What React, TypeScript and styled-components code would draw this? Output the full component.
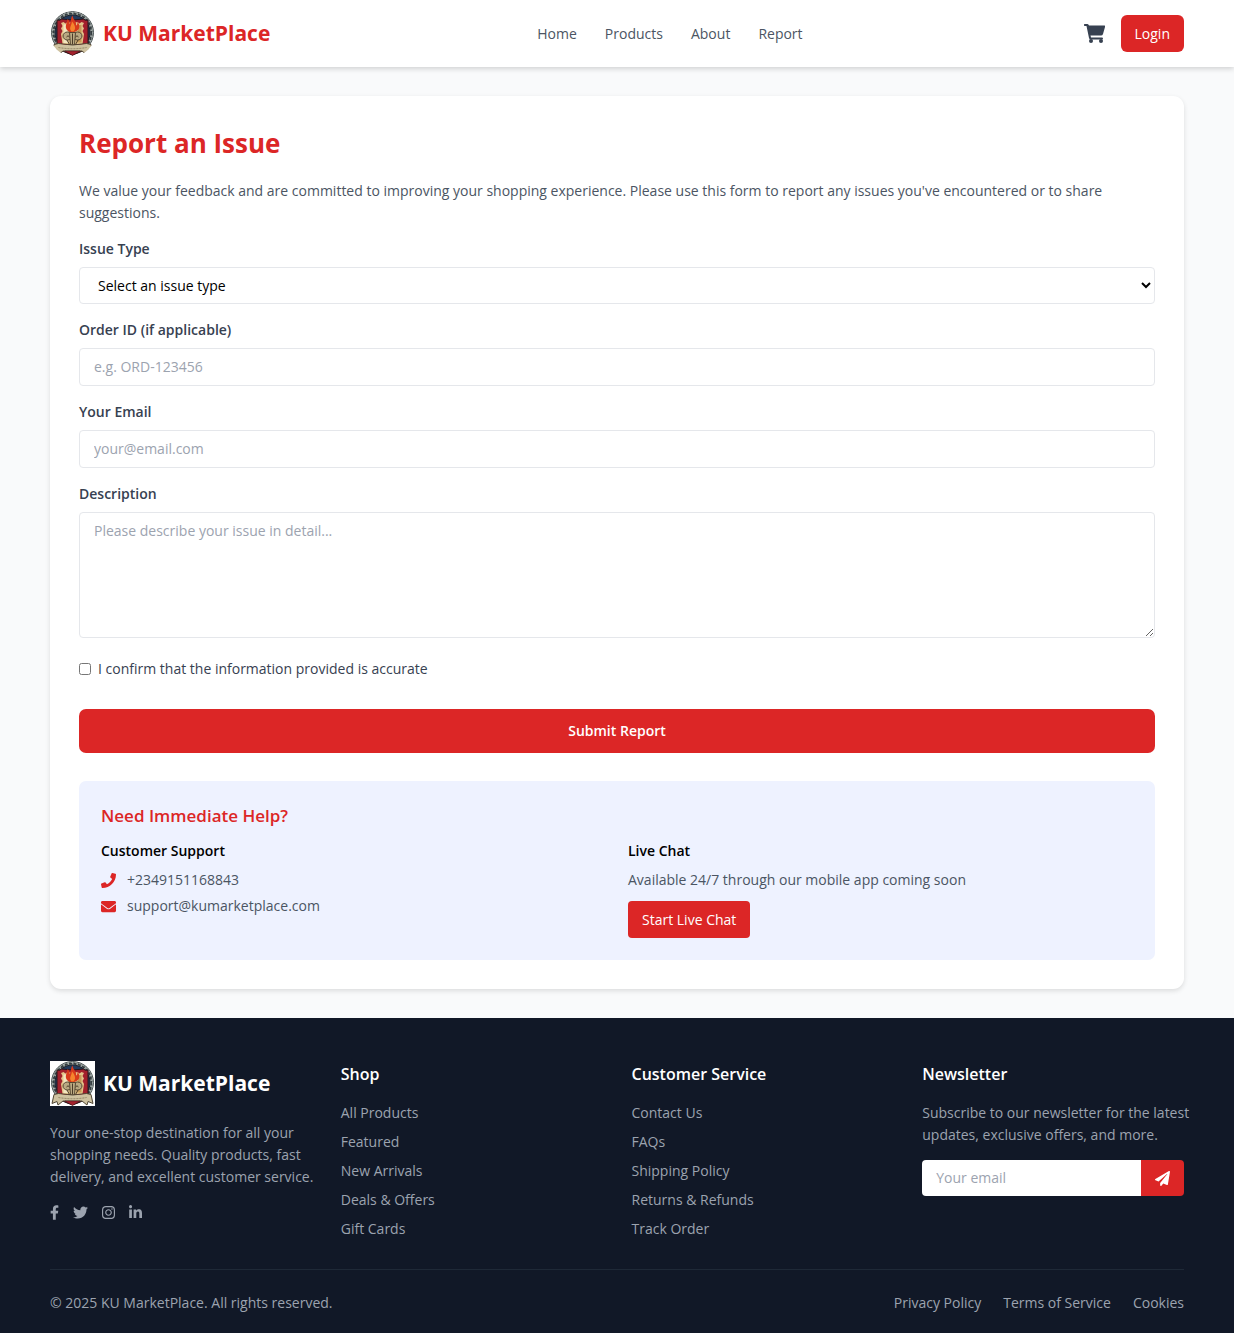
import React, { useState } from "react";
import styled, { createGlobalStyle } from "styled-components";
import {
  FaPhone,
  FaEnvelope,
  FaFacebookF,
  FaTwitter,
  FaInstagram,
  FaLinkedinIn,
  FaPaperPlane,
} from "react-icons/fa";

const red = "#dc2626";

const GlobalStyle = createGlobalStyle`
  *, *::before, *::after { box-sizing: border-box; }
  body {
    margin: 0;
    background: #f9fafb;
    color: #000;
    font-family: "Segoe UI", "Open Sans", "Noto Sans", sans-serif;
    font-size: 14px;
    line-height: 22px;
  }
  h1, h2, h3, p, ul { margin: 0; padding: 0; }
  ul { list-style: none; }
  a { color: inherit; text-decoration: none; }
  button, input, select, textarea { font: inherit; }
  button { border: 0; cursor: pointer; }
`;

const Container = styled.div`
  max-width: 1396px;
  margin: 0 auto;
  padding: 0 50px;
`;

const Header = styled.header`
  position: relative;
  background: #fff;
  box-shadow: 0 2px 5px rgba(0, 0, 0, 0.16);
`;

const HeaderRow = styled(Container)`
  display: flex;
  align-items: center;
  justify-content: space-between;
  padding-top: 11px;
  padding-bottom: 11px;
`;

const Brand = styled.a<{ $color: string }>`
  display: flex;
  align-items: center;
  gap: 8px;
  color: ${(p) => p.$color};
  font-size: 21px;
  font-weight: 700;
  line-height: 29px;
`;

const Crest = styled.svg<{ $round?: boolean }>`
  display: block;
  width: 45px;
  height: 45px;
  background: #fff;
  border-radius: ${(p) => (p.$round ? "50%" : "0")};
`;

const Nav = styled.nav`
  display: flex;
  gap: 28px;
  color: #4b5563;
`;

const Actions = styled.div`
  display: flex;
  align-items: center;
  gap: 16px;
  padding-left: 14px;
`;

const CartLink = styled.a`
  display: flex;
  color: #374151;

  svg {
    width: 21px;
    height: 19px;
  }
`;

const Button = styled.button<{ $radius: number }>`
  padding: 7px 14px;
  background: ${red};
  color: #fff;
  line-height: 23px;
  border-radius: ${(p) => p.$radius}px;
`;

const Main = styled(Container)`
  padding-top: 29px;
  padding-bottom: 29px;
`;

const Card = styled.section`
  padding: 29px;
  background: #fff;
  border-radius: 11px;
  box-shadow: 0 2px 5px rgba(0, 0, 0, 0.12);
`;

const Title = styled.h1`
  margin-bottom: 19px;
  color: ${red};
  font-size: 26px;
  font-weight: 700;
  line-height: 36px;
`;

const Intro = styled.p`
  margin-bottom: 14px;
  color: #4b5563;
`;

const Form = styled.form`
  display: flex;
  flex-direction: column;
  gap: 15px;
`;

const Field = styled.div`
  display: flex;
  flex-direction: column;
  gap: 7px;

  label {
    color: #374151;
    font-weight: 600;
  }

  input,
  select,
  textarea {
    width: 100%;
    padding: 7px 14px;
    border: 1px solid #e5e7eb;
    border-radius: 4px;
    background: #fff;
    color: #000;
    outline: none;
  }

  textarea {
    display: block;
    resize: vertical;
  }

  ::placeholder {
    color: #9ca3af;
    opacity: 1;
  }
`;

const Confirm = styled.label`
  display: flex;
  align-items: center;
  gap: 7px;
  margin: 5px 0 14px;
  color: #374151;

  input {
    width: 12px;
    height: 12px;
    margin: 0;
  }
`;

const Submit = styled.button`
  padding: 11px 22px;
  background: ${red};
  color: #fff;
  font-weight: 600;
  border-radius: 7px;
`;

const Help = styled.section`
  margin-top: 28px;
  padding: 22px;
  background: #eef2ff;
  border-radius: 7px;
`;

const HelpTitle = styled.h2`
  margin-bottom: 11px;
  color: ${red};
  font-size: 17px;
  font-weight: 600;
  line-height: 26px;
`;

const HelpGrid = styled.div`
  display: grid;
  grid-template-columns: repeat(2, 1fr);
  gap: 22px;
  color: #4b5563;

  h3 {
    margin-bottom: 7px;
    color: #000;
    font-size: 14px;
    font-weight: 600;
  }

  p {
    margin-bottom: 10px;
  }
`;

const Contact = styled.a`
  display: flex;
  align-items: center;
  gap: 11px;
  margin-bottom: 4px;

  svg {
    width: 15px;
    height: 15px;
    color: ${red};
  }
`;

const Footer = styled.footer`
  background: #111827;
  color: #9ca3af;
`;

const FooterGrid = styled(Container)`
  display: grid;
  grid-template-columns: repeat(4, minmax(0, 1fr));
  gap: 29px;
  padding-top: 43px;
  padding-bottom: 29px;
`;

const Blurb = styled.p`
  margin-right: -12px;
`;

const About = styled(Blurb)`
  margin-top: 16px;
  margin-bottom: 13px;
`;

const Socials = styled.div`
  display: flex;
  gap: 14px;
`;

const SocialLink = styled.a<{ $width: number }>`
  display: flex;
  align-items: center;
  height: 22px;

  svg {
    width: ${(p) => p.$width}px;
    height: 15px;
  }
`;

const FooterTitle = styled.h3`
  margin-bottom: 14px;
  color: #fff;
  font-size: 16px;
  font-weight: 600;
  line-height: 27px;
`;

const LinkList = styled.ul`
  display: grid;
  gap: 7px;
`;

const Subscribe = styled.form`
  display: flex;
  margin-top: 14px;
  border-radius: 4px;
  overflow: hidden;

  input {
    flex: 1;
    min-width: 0;
    padding: 7px 14px;
    border: 0;
    outline: none;
    background: #fff;
  }

  ::placeholder {
    color: #9ca3af;
    opacity: 1;
  }

  button {
    display: flex;
    align-items: center;
    padding: 7px 14px;
    background: ${red};
    color: #fff;
  }

  svg {
    width: 15px;
    height: 15px;
  }
`;

const Legal = styled.div`
  display: flex;
  justify-content: space-between;
  padding: 22px 0 19px;
  border-top: 1px solid #1f2937;
`;

const LegalLinks = styled.div`
  display: flex;
  gap: 22px;
`;

function CartIcon() {
  return (
    <svg viewBox="0 0 42 38" fill="currentColor" aria-hidden="true">
      <path d="M1 0h6q2 0 3 3h31q2 0 1 3l-4 14q-1 3-4 3H13l1 4h22q2 0 2 2t-2 2H13q-2 0-3-3L5 4H1q-1 0-1-2t1-2z" />
      <circle cx="14" cy="34" r="4" />
      <circle cx="34" cy="34" r="4" />
    </svg>
  );
}

function Logo({ round }: { round?: boolean }) {
  return (
    <Crest $round={round} viewBox="0 0 90 90" aria-hidden="true">
      <circle cx="45" cy="43" r="42" fill="#9ba3a0" stroke="#4c5556" strokeWidth="2" />
      <circle cx="45" cy="43" r="38" fill="none" stroke="#343d40" strokeWidth="4" strokeDasharray="6 3" />
      <circle cx="45" cy="43" r="40" fill="none" stroke="#d3d8d4" strokeWidth="1" strokeDasharray="4 4" />
      <circle cx="45" cy="43" r="35" fill="#233a5c" stroke="#1b222b" strokeWidth="2" />
      <path d="M14 18q6 2 9-2l22 2 22-2q3 4 9 2v46q0 14-31 24-31-10-31-24z" fill="#a3202c" stroke="#28161a" strokeWidth="2" />
      <path d="M22 24l5-2 4 3 4-3 10 2 10-2 4 3 4-3 5 2-3 6 3 5-3 5 3 6-3 20H25l-3-20 3-6-3-5 3-5z" fill="#e2c58a" />
      <path d="M27 27h9v37h-9z" fill="#f4e6c0" />
      <path d="M57 28h6v35H53z" fill="#c79a58" />
      <path d="M39 42c-13-8-5-16-4-26 4 3 4 7 4 10 4-4 2-12 6-17 1 9 9 12 7 20 3-1 3-4 3-8 8 12 2 19-7 21z" fill="#d83a1c" />
      <path d="M43 41c-6-7 0-11 1-20 6 7 9 14 3 20z" fill="#f6852d" />
      <g fill="#b9a982" stroke="#554733" strokeWidth="2">
        <ellipse cx="35" cy="50" rx="9" ry="8" />
        <ellipse cx="55" cy="50" rx="9" ry="8" />
        <path d="M39 43h12l-2 25h-8z" />
      </g>
      <path d="M45 45v22M33 52q3-5 6 0M57 52q-3-5-6 0M34 58l5 9M56 58l-5 9" fill="none" stroke="#4b3b28" strokeWidth="2" />
      <path d="M8 67l-4 18 10-4 2 7 10-8h38l10 8 2-7 10 4-4-18-9-2q-28 6-56 0z" fill="#cfc2a0" stroke="#514634" strokeWidth="2" />
      <path d="M17 73q28 5 56 0" fill="none" stroke="#8d8060" strokeWidth="2" strokeDasharray="4 2" />
      <path d="M30 80h30l-15 9z" fill="#a3202c" stroke="#3a1a1c" />
    </Crest>
  );
}

const shopLinks = ["All Products", "Featured", "New Arrivals", "Deals & Offers", "Gift Cards"];
const serviceLinks = ["Contact Us", "FAQs", "Shipping Policy", "Returns & Refunds", "Track Order"];
const socials = [
  { name: "Facebook", Icon: FaFacebookF, width: 9 },
  { name: "Twitter", Icon: FaTwitter, width: 15 },
  { name: "Instagram", Icon: FaInstagram, width: 13 },
  { name: "LinkedIn", Icon: FaLinkedinIn, width: 13 },
];

function FooterColumn({ title, links }: { title: string; links: string[] }) {
  return (
    <div>
      <FooterTitle>{title}</FooterTitle>
      <LinkList>
        {links.map((l) => (
          <li key={l}>
            <a href="#">{l}</a>
          </li>
        ))}
      </LinkList>
    </div>
  );
}

export default function App() {
  const [confirmed, setConfirmed] = useState(false);
  const stop = (e: React.FormEvent) => e.preventDefault();

  return (
    <>
      <GlobalStyle />
      <Header>
        <HeaderRow>
          <Brand href="#" $color={red}>
            <Logo round />
            KU MarketPlace
          </Brand>
          <Nav>
            {["Home", "Products", "About", "Report"].map((l) => (
              <a key={l} href="#">
                {l}
              </a>
            ))}
          </Nav>
          <Actions>
            <CartLink href="#" aria-label="Cart">
              <CartIcon />
            </CartLink>
            <Button type="button" $radius={6}>
              Login
            </Button>
          </Actions>
        </HeaderRow>
      </Header>

      <Main as="main">
        <Card>
          <Title>Report an Issue</Title>
          <Intro>
            We value your feedback and are committed to improving your shopping experience. Please use this form to
            report any issues you've encountered or to share suggestions.
          </Intro>
          <Form onSubmit={stop}>
            <Field>
              <label htmlFor="issue">Issue Type</label>
              <select id="issue" defaultValue="">
                <option value="">Select an issue type</option>
              </select>
            </Field>
            <Field>
              <label htmlFor="order">Order ID (if applicable)</label>
              <input id="order" type="text" placeholder="e.g. ORD-123456" />
            </Field>
            <Field>
              <label htmlFor="email">Your Email</label>
              <input id="email" type="email" placeholder="your@email.com" />
            </Field>
            <Field>
              <label htmlFor="description">Description</label>
              <textarea id="description" rows={5} placeholder="Please describe your issue in detail..." />
            </Field>
            <Confirm>
              <input type="checkbox" checked={confirmed} onChange={(e) => setConfirmed(e.target.checked)} />
              I confirm that the information provided is accurate
            </Confirm>
            <Submit type="submit">Submit Report</Submit>
          </Form>

          <Help>
            <HelpTitle>Need Immediate Help?</HelpTitle>
            <HelpGrid>
              <div>
                <h3>Customer Support</h3>
                <Contact href="tel:+2349151168843">
                  <FaPhone />
                  +2349151168843
                </Contact>
                <Contact href="mailto:support@kumarketplace.com">
                  <FaEnvelope />
                  support@kumarketplace.com
                </Contact>
              </div>
              <div>
                <h3>Live Chat</h3>
                <p>Available 24/7 through our mobile app coming soon</p>
                <Button type="button" $radius={4}>
                  Start Live Chat
                </Button>
              </div>
            </HelpGrid>
          </Help>
        </Card>
      </Main>

      <Footer>
        <FooterGrid>
          <div>
            <Brand href="#" $color="#fff">
              <Logo />
              KU MarketPlace
            </Brand>
            <About>
              Your one-stop destination for all your shopping needs. Quality products, fast delivery, and excellent
              customer service.
            </About>
            <Socials>
              {socials.map(({ name, Icon, width }) => (
                <SocialLink key={name} href="#" aria-label={name} $width={width}>
                  <Icon />
                </SocialLink>
              ))}
            </Socials>
          </div>
          <FooterColumn title="Shop" links={shopLinks} />
          <FooterColumn title="Customer Service" links={serviceLinks} />
          <div>
            <FooterTitle>Newsletter</FooterTitle>
            <Blurb>Subscribe to our newsletter for the latest updates, exclusive offers, and more.</Blurb>
            <Subscribe onSubmit={stop}>
              <input type="email" placeholder="Your email" aria-label="Your email" />
              <button type="submit" aria-label="Subscribe">
                <FaPaperPlane />
              </button>
            </Subscribe>
          </div>
        </FooterGrid>
        <Container>
          <Legal>
            <p>© 2025 KU MarketPlace. All rights reserved.</p>
            <LegalLinks>
              <a href="#">Privacy Policy</a>
              <a href="#">Terms of Service</a>
              <a href="#">Cookies</a>
            </LegalLinks>
          </Legal>
        </Container>
      </Footer>
    </>
  );
}
